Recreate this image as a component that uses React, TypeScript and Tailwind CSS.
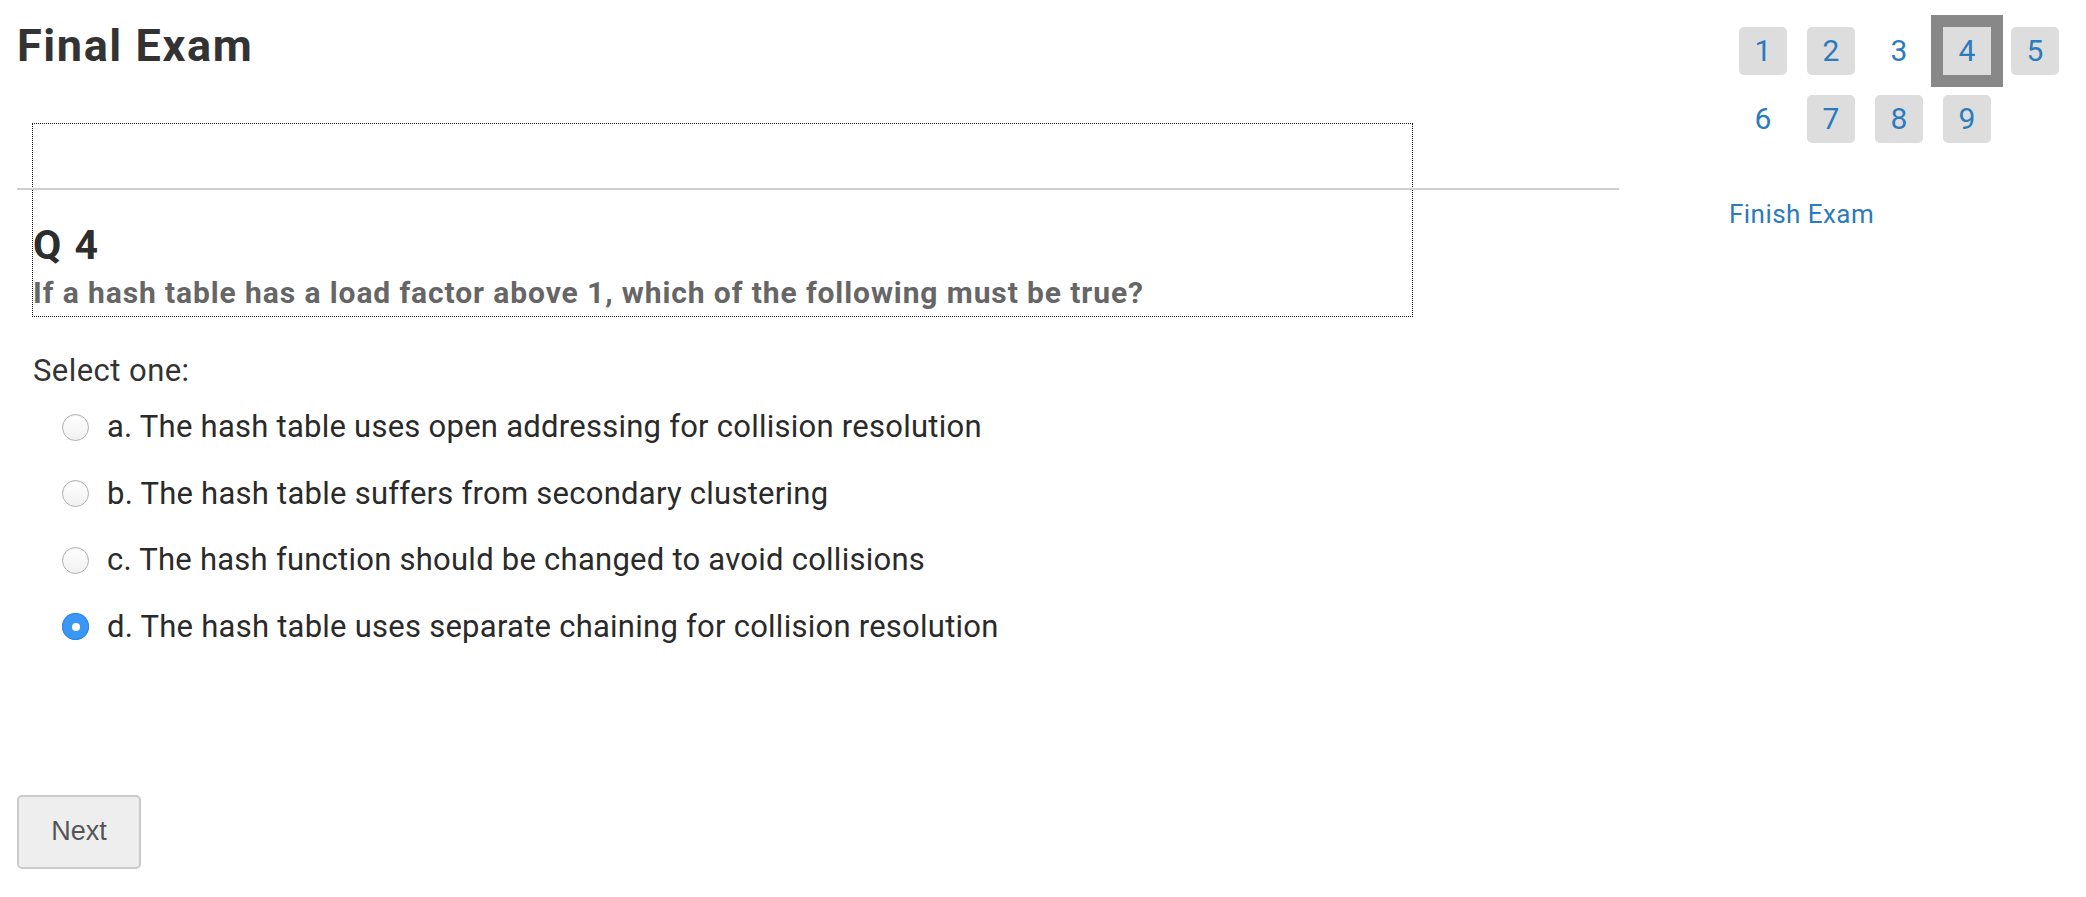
import { useState } from 'react';

const options = [
  'a. The hash table uses open addressing for collision resolution',
  'b. The hash table suffers from secondary clustering',
  'c. The hash function should be changed to avoid collisions',
  'd. The hash table uses separate chaining for collision resolution',
];

const navItems = [
  { n: 1, filled: true },
  { n: 2, filled: true },
  { n: 3, filled: false },
  { n: 4, filled: true, current: true },
  { n: 5, filled: true },
  { n: 6, filled: false },
  { n: 7, filled: true },
  { n: 8, filled: true },
  { n: 9, filled: true },
];

function Radio({ checked }: { checked: boolean }) {
  if (checked) {
    return (
      <span className="flex h-[27px] w-[27px] shrink-0 items-center justify-center rounded-full bg-[#3b97f7] shadow-[inset_0_0_0_1px_#2f86e6]">
        <span className="h-[8px] w-[8px] rounded-full bg-white" />
      </span>
    );
  }
  return (
    <span className="h-[27px] w-[27px] shrink-0 rounded-full border-[1.5px] border-[#b0b0b0] bg-gradient-to-b from-white to-[#f1f1f1] shadow-[inset_0_1px_1px_rgba(0,0,0,0.06)]" />
  );
}

export default function App() {
  const [selected, setSelected] = useState(3);

  return (
    <div className="flex min-h-[897px] bg-white font-['Roboto',sans-serif] text-[#333]">
      <main className="w-[1619px] shrink-0 pl-[17px]">
        <h1 className="pt-[20px] text-[45px] font-bold leading-[52px] tracking-[1.6px] text-[#333]">Final Exam</h1>

        <div className="ml-[15px] mt-[51px] w-[1381px] border border-dotted border-[#111]">
          <div className="h-[64px]" />
          <div className="-ml-[16px] h-[2px] w-[1602px] bg-[#cfcfcf]" />
          <h2 className="mt-[31px] text-[41px] font-bold leading-[48px] tracking-[1.5px] text-[#2d2d2d]">Q 4</h2>
          <p className="mt-[6px] pb-[5px] text-[30px] font-bold leading-[36px] tracking-[0.9px] text-[#666]">
            If a hash table has a load factor above 1, which of the following must be true?
          </p>
        </div>

        <div className="ml-[16px] mt-[36px] text-[31px] leading-[36px] tracking-[0.45px] text-[#333]">Select one:</div>

        <div className="ml-[45px] mt-[20px] flex flex-col gap-[30.5px]">
          {options.map((label, i) => (
            <label
              key={label}
              onClick={() => setSelected(i)}
              className="flex cursor-pointer items-center gap-[18px] text-[31px] leading-[36px] tracking-[0.25px] text-[#2a2a2a]"
            >
              <Radio checked={selected === i} />
              <span>{label}</span>
            </label>
          ))}
        </div>

        <button className="mt-[150px] h-[74px] w-[124px] rounded-[5px] border-2 border-[#cacaca] bg-[#eeeeee] font-['Liberation_Sans',sans-serif] text-[27px] text-[#555]">
          Next
        </button>
      </main>

      <aside className="pl-[110px]">
        <div className="ml-[10px] mt-[27px] grid grid-cols-[repeat(5,48px)] gap-[20px]">
          {navItems.map((item) => (
            <a
              key={item.n}
              href="#"
              className={
                'flex h-[48px] w-[48px] items-center justify-center text-[30px] leading-none text-[#2b7bbd] ' +
                (item.filled ? 'bg-[#dddddd] ' : '') +
                (item.current ? 'outline-[12px] outline-solid outline-[#888888]' : 'rounded-[5px]')
              }
            >
              {item.n}
            </a>
          ))}
        </div>
        <a href="#" className="mt-[56px] block text-[26px] leading-[30px] tracking-[0.45px] text-[#2b7bbd]">
          Finish Exam
        </a>
      </aside>
    </div>
  );
}
